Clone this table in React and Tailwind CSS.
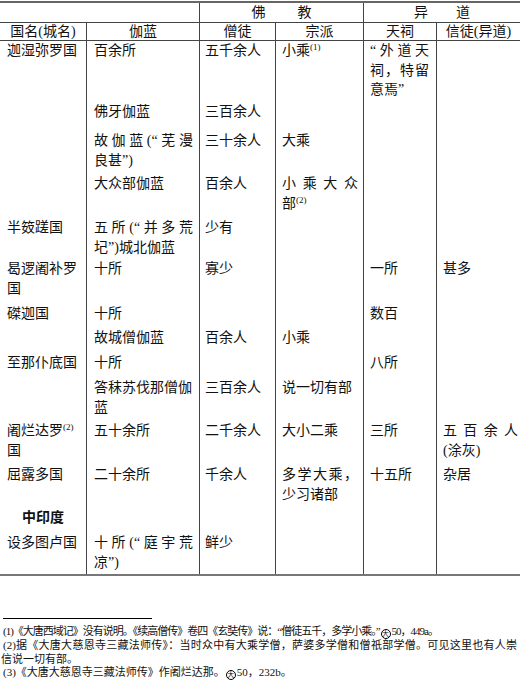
import React from 'react';

// column widths: 国名 | 伽蓝 | 僧徒 | 宗派 | 天祠 | 信徒
const GRID = 'grid grid-cols-[87px_113px_76px_88px_73px_83px]';
const PAD = ['pl-[7px] pr-[4px]', 'pl-[7px] pr-[6px]', 'pl-[5px] pr-[4px]', 'pl-[6px] pr-[5px]', 'pl-[6px] pr-[7px]', 'pl-[6px] pr-[2px]'];
const LINE = 'border-[#444]';

const Sup = ({ children }) => (
  <span className="text-[9px] leading-none align-[5px]">{children}</span>
);

const Circ = () => (
  <span className="inline-block w-[10px] h-[10px] mx-[1px] rounded-full border border-black text-[7px] leading-[8px] text-center align-[-1px] tracking-normal">
    大
  </span>
);

const j = (t) => ({ t, j: true });

const rows = [
  { h: 61, c: ['迦湿弥罗国', '百余所', '五千余人', <>小乘<Sup>(1)</Sup></>, [j('“外道天'), j('祠，特留'), '意焉”'], null] },
  { h: 29, c: [null, '佛牙伽蓝', '三百余人', null, null, null] },
  { h: 43, c: [null, [j('故伽蓝(“芜漫'), '良甚”)'], '三十余人', '大乘', null, null] },
  { h: 44, c: [null, '大众部伽蓝', '百余人', [j('小乘大众'), <>部<Sup>(2)</Sup></>], null, null] },
  { h: 41, c: ['半笯蹉国', [j('五所(“并多荒'), '圮”)城北伽蓝'], '少有', null, null, null] },
  { h: 45, c: [['曷逻阇补罗', '国'], '十所', '寡少', null, '一所', '甚多'] },
  { h: 24, c: ['磔迦国', '十所', null, null, '数百', null] },
  { h: 25, c: [null, '故城僧伽蓝', '百余人', '小乘', null, null] },
  { h: 25, c: ['至那仆底国', '十所', null, null, '八所', null] },
  { h: 43, c: [null, ['答秣苏伐那僧伽', '蓝'], '三百余人', '说一切有部', null, null] },
  { h: 44, c: [[<>阇烂达罗<Sup>(2)</Sup></>, '国'], '五十余所', '二千余人', '大小二乘', '三所', [j('五百余人'), '(涂灰)']] },
  { h: 43, c: ['屈露多国', '二十余所', '千余人', [j('多学大乘，'), '少习诸部'], '十五所', '杂居'] },
  { h: 25, region: '中印度' },
  { h: 41, c: ['设多图卢国', [j('十所(“庭宇荒'), '凉”)'], '鲜少', null, null, null] },
];

const Lines = ({ value }) => {
  if (value == null) return null;
  const arr = Array.isArray(value) ? value : [value];
  return arr.map((l, i) =>
    l && l.j ? (
      <div key={i} className="text-justify [text-align-last:justify]">{l.t}</div>
    ) : (
      <div key={i} className="whitespace-nowrap">{l}</div>
    )
  );
};

const Row = ({ row }) => (
  <div className={GRID} style={{ height: row.h }}>
    {[0, 1, 2, 3, 4, 5].map((i) => (
      <div
        key={i}
        className={`${PAD[i]} ${i < 5 ? `border-r ${LINE}` : ''} ${
          row.region && i === 0 ? 'text-center font-bold !px-0' : ''
        }`}
      >
        {row.region ? (i === 0 ? row.region : null) : <Lines value={row.c[i]} />}
      </div>
    ))}
  </div>
);

export default function App() {
  return (
    <div
      lang="zh-CN"
      className="w-[520px] h-[682px] bg-white text-[#111] overflow-hidden font-['Liberation_Serif','Noto_Sans_CJK_SC',serif] text-[14px] leading-[19.5px]"
    >
      {/* table */}
      <div className="mt-[1px] border-t-2 border-[#666]">
        <div className={`grid grid-cols-[200px_164px_156px] h-[20px] border-b ${LINE}`}>
          <div className={`border-r ${LINE}`} />
          <div className={`flex justify-center gap-[32px] leading-[19px] border-r ${LINE}`}>
            <span>佛</span>
            <span>教</span>
          </div>
          <div className="flex justify-center gap-[28px] leading-[19px]">
            <span>异</span>
            <span>道</span>
          </div>
        </div>
        <div className={`${GRID} h-[18px] border-b ${LINE} leading-[17px] text-center`}>
          <div className={`border-r ${LINE}`}>国名(城名)</div>
          <div className={`border-r ${LINE}`}>伽蓝</div>
          <div className={`border-r ${LINE}`}>僧徒</div>
          <div className={`border-r ${LINE}`}>宗派</div>
          <div className={`border-r ${LINE}`}>天祠</div>
          <div>信徒(异道)</div>
        </div>
        {rows.map((r, i) => (
          <Row key={i} row={r} />
        ))}
        <div className="border-t-2 border-[#777]" />
      </div>

      {/* footnotes */}
      <div className="ml-[3px] mt-[42px] w-[149px] h-px bg-black" />
      <div className="mt-[6px] pl-[3px] pr-[3px] text-[11px] leading-[13.5px]">
        <div className="whitespace-nowrap tracking-[-1px]">
          (1)《大唐西域记》没有说明。《续高僧传》卷四《玄奘传》说：“僧徒五千，多学小乘。”<Circ />50，449a。
        </div>
        <div className="text-justify [text-align-last:justify]">
          (2)据《大唐大慈恩寺三藏法师传》：当时众中有大乘学僧，萨婆多学僧和僧祇部学僧。可见这里也有人崇
        </div>
        <div className="whitespace-nowrap -ml-[2px]">信说一切有部。</div>
        <div className="whitespace-nowrap">
          (3)《大唐大慈恩寺三藏法师传》作阇烂达那。<Circ />50，232b。
        </div>
      </div>
    </div>
  );
}
